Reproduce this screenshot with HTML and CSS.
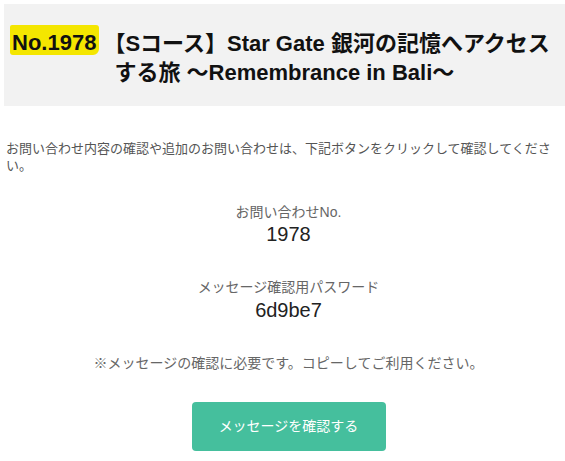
FILE: index.html
```html
<!DOCTYPE html>
<html lang="ja">
<head>
<meta charset="utf-8">
<link rel="stylesheet" href="styles.css">
</head>
<body>
<div class="page">
  <header class="head">
    <h1 class="title">
      <span class="num">No.1978</span>
      <span class="name">【Sコース】Star Gate 銀河の記憶へアクセスする旅 ～Remembrance in Bali～</span>
    </h1>
  </header>
  <p class="lead">お問い合わせ内容の確認や追加のお問い合わせは、下記ボタンをクリックして確認してください。</p>
  <div class="info">
    <div class="label first">お問い合わせNo.</div>
    <div class="value v1">1978</div>
    <div class="label second">メッセージ確認用パスワード</div>
    <div class="value v2">6d9be7</div>
    <div class="note">※メッセージの確認に必要です。コピーしてご利用ください。</div>
    <a class="btn" href="#">メッセージを確認する</a>
  </div>
</div>
</body>
</html>
```

FILE: styles.css
```css
html, body {
  margin: 0;
  padding: 0;
  background: #fff;
}
body {
  font-family: "Liberation Sans", "Noto Sans CJK JP", sans-serif;
  color: #555;
}
.page {
  padding: 4px 0 0 4px;
}
.head {
  background: #f2f2f2;
  padding: 21px 8px 19px 6px;
}
.title {
  margin: 0;
  display: flex;
  align-items: flex-start;
  font-size: 22px;
  line-height: 29px;
  font-weight: bold;
  color: #111;
}
.num {
  flex: none;
  display: block;
  background: #f4e600;
  padding: 6px 3px 0 2px;
  line-height: 24px;
  border-radius: 2px 3px 6px 3px;
}
.name {
  margin: 4px 0 0 15px;
  text-indent: -11px;
  text-spacing-trim: space-all;
}
.lead {
  margin: 34px 0 0;
  padding: 0 8px 0 2px;
  font-size: 13px;
  line-height: 17px;
  color: #555;
}
.info {
  display: flex;
  flex-direction: column;
  align-items: center;
  text-align: center;
  padding-left: 8px;
}
.label {
  font-size: 14px;
  line-height: 18px;
  color: #666;
}
.label.first {
  margin-top: 29px;
}
.label.second {
  margin-top: 34px;
}
.value {
  font-size: 20px;
  line-height: 20px;
  color: #222;
}
.v1 {
  margin-top: 3px;
}
.v2 {
  margin-top: 4px;
}
.note {
  margin-top: 33px;
  font-size: 14px;
  line-height: 20px;
  color: #666;
}
.btn {
  margin-top: 29px;
  display: block;
  width: 194px;
  height: 49px;
  line-height: 49px;
  background: #45bf9d;
  border-radius: 4px;
  color: #fff;
  font-size: 14px;
  text-decoration: none;
  text-align: center;
}
```
